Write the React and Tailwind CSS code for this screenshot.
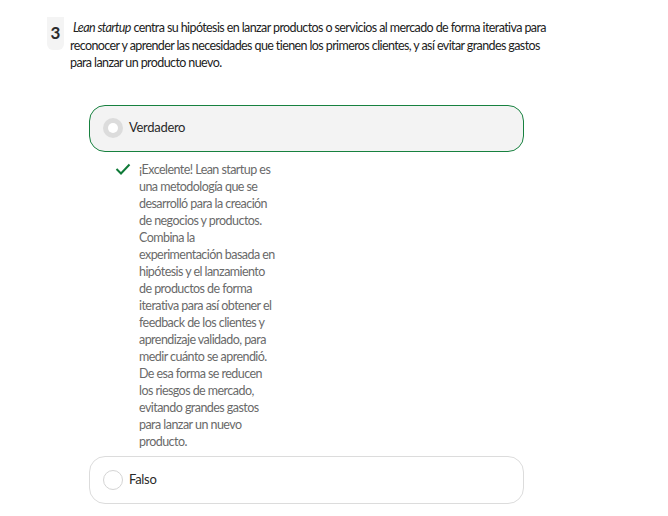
export default function App() {
  return (
    <div className="min-h-[516px] w-full bg-white font-['Lato',sans-serif]">
      <div className="flex gap-[6px] pl-[47px] pt-[17px]">
        <div className="flex h-[33px] w-[17px] items-start justify-center rounded-b-[6px] bg-[#f4f4f4] pt-[6px]">
          <span className="text-[17px] font-bold leading-[20px] text-[#2b2b2b]">3</span>
        </div>
        <p className="w-[482px] pt-[2px] text-[12.5px] leading-[17.5px] tracking-[-0.6px] text-[#222]">
          <span className="pl-[3px] italic">Lean startup</span> centra su hipótesis en lanzar productos o servicios al mercado de forma iterativa para reconocer y aprender las necesidades que tienen los primeros clientes, y así evitar grandes gastos para lanzar un producto nuevo.
        </p>
      </div>

      <div className="ml-[89px] mt-[33px] w-[435px]">
        <div className="flex h-[47px] items-center gap-[6px] rounded-[16px] border border-[#17813f] bg-[#f3f3f3] px-[13px]">
          <span className="flex h-[20px] w-[20px] items-center justify-center rounded-full bg-[#dcdcdc]">
            <span className="h-[10px] w-[10px] rounded-full bg-white" />
          </span>
          <span className="text-[13px] tracking-[-0.3px] text-[#2a2a2a]">Verdadero</span>
        </div>

        <div className="flex gap-[8px] pl-[26px] pt-[9px]">
          <svg width="16" height="12" viewBox="0 0 16 12" className="mt-[2px] shrink-0">
            <path d="M1.5 6 L6 10.5 L14.5 1.5" fill="none" stroke="#0f7a38" strokeWidth="2" />
          </svg>
          <p className="w-[137px] text-[12.5px] leading-[17px] tracking-[-0.55px] text-[#6a6a6a]">
            ¡Excelente! Lean startup es una metodología que se desarrolló para la creación de negocios y productos. Combina la experimentación basada en hipótesis y el lanzamiento de productos de forma iterativa para así obtener el feedback de los clientes y aprendizaje validado, para medir cuánto se aprendió. De esa forma se reducen los riesgos de mercado, evitando grandes gastos para lanzar un nuevo producto.
          </p>
        </div>

        <div className="mt-[6px] flex h-[48px] items-center gap-[6px] rounded-[16px] border border-[#dcdcdc] bg-white px-[13px]">
          <span className="h-[20px] w-[20px] rounded-full border border-[#d4d4d4]" />
          <span className="text-[13px] tracking-[-0.3px] text-[#2a2a2a]">Falso</span>
        </div>
      </div>
    </div>
  );
}
